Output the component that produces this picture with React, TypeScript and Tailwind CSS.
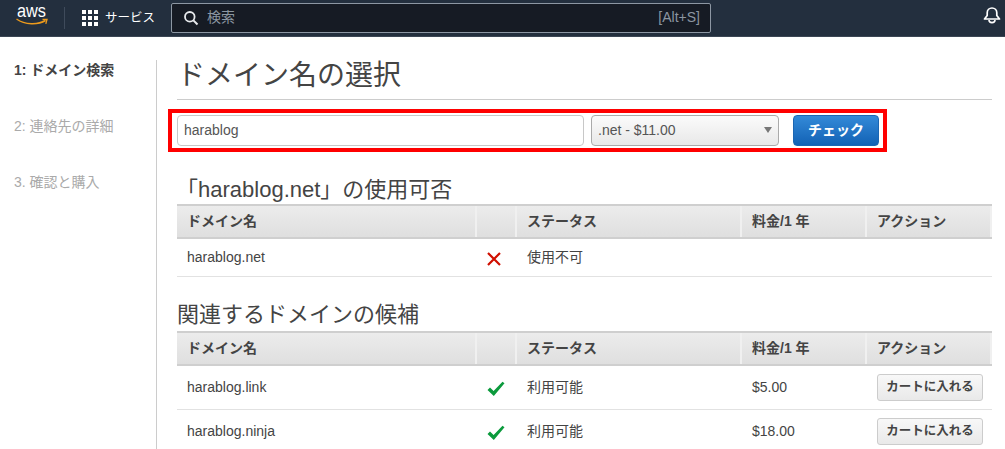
const FONT = "font-['Liberation_Sans','Noto_Sans_CJK_JP',sans-serif]";

function Cross() {
  return (
    <svg width="14" height="14" viewBox="0 0 14 14" className="block">
      <path d="M1 1 L13 13 M13 1 L1 13" stroke="#d00f00" strokeWidth="2.2" fill="none" />
    </svg>
  );
}

function Check() {
  return (
    <svg width="18" height="16" viewBox="0 0 18 16" className="block">
      <path d="M0.5 9 L3 6.6 L6.6 10 L15.5 0.8 L17.5 2.2 L6.8 15 Z" fill="#0b9a3c" />
    </svg>
  );
}

type Row = { name: string; ok: boolean; status: string; price?: string };

function DomainTable({ rows }: { rows: Row[] }) {
  const head = "flex items-center h-full text-[14px] font-bold text-[#444] pl-[10px] border-r-2 border-[#f0f0f0]";
  return (
    <div className="w-[815px]">
      <div className="flex h-[35px] border-t-2 border-b-2 border-[#cfcfcf] bg-gradient-to-b from-[#ececec] to-[#dfdfdf]">
        <div className={head + " w-[300px]"}>ドメイン名</div>
        <div className={head + " w-[40px]"} />
        <div className={head + " w-[225px]"}>ステータス</div>
        <div className={head + " w-[125px]"}>料金/1 年</div>
        <div className={head + " flex-1 border-r-0"}>アクション</div>
      </div>
      {rows.map((r) => (
        <div key={r.name} className={"flex items-center border-b border-[#e2e2e2] text-[14px] text-[#444] " + (r.price ? "h-[44px]" : "h-[38px]")}>
          <div className="w-[300px] pl-[10px] pb-[1px]">{r.name}</div>
          <div className="w-[40px] flex justify-start pl-[10px] pt-[2px]">{r.ok ? <Check /> : <Cross />}</div>
          <div className="w-[225px] pl-[10px] pb-[1px]">{r.status}</div>
          <div className="w-[125px] pl-[10px] pb-[1px]">{r.price}</div>
          <div className="flex-1 pl-[10px]">
            {r.price && (
              <button className="block w-[106px] h-[27px] rounded-[3px] border border-[#cccccc] bg-gradient-to-b from-[#f8f8f8] to-[#e9e9e9] text-[12.5px] font-bold text-[#444]">
                カートに入れる
              </button>
            )}
          </div>
        </div>
      ))}
    </div>
  );
}

export default function App() {
  return (
    <div className={FONT + " w-[1005px] h-[449px] overflow-hidden bg-white"}>
      <header className="h-[37px] bg-[#232f3e] flex items-center border-b border-[#3b4654]">
        <div className="w-[64px] pl-[16px] shrink-0">
          <svg width="32" height="36" viewBox="0 0 32 36" className="block">
            <text x="1" y="17" fontSize="18" textLength="29" lengthAdjust="spacingAndGlyphs" fill="#ffffff" fontFamily="'Liberation Sans',sans-serif">aws</text>
            <path d="M0.5 19 C9 25 22 25 29.5 20.5" stroke="#ec9a1c" strokeWidth="1.5" fill="none" />
            <path d="M26.5 19.5 L31 19.4 L29.8 23.8" stroke="#ec9a1c" strokeWidth="1.3" fill="none" />
          </svg>
        </div>
        <div className="w-px h-[22px] bg-[#3f4b5b]" />
        <div className="grid grid-cols-3 gap-[2px] ml-[17px] w-[16px] shrink-0">
          {Array.from({ length: 9 }, (_, i) => (
            <span key={i} className="w-[4px] h-[4px] bg-white block" />
          ))}
        </div>
        <span className="ml-[7px] text-[12.5px] text-white w-[50px] whitespace-nowrap">サービス</span>
        <div className="ml-[16px] w-[540px] h-[30px] mb-[1px] bg-[#161b24] border border-[#8d97a3] rounded-[2px] flex items-center">
          <svg width="16" height="16" viewBox="0 0 16 16" className="ml-[11px] block">
            <circle cx="6.8" cy="6.8" r="4.8" stroke="#e8eaed" strokeWidth="1.8" fill="none" />
            <path d="M10.4 10.4 L14.5 14.5" stroke="#e8eaed" strokeWidth="2" />
          </svg>
          <span className="ml-[8px] text-[14px] text-[#8b96a1]">検索</span>
          <span className="ml-auto mr-[10px] text-[14px] text-[#8b96a1]">[Alt+S]</span>
        </div>
        <svg width="18" height="18" viewBox="0 0 18 18" className="ml-[272px] mb-[6px] block">
          <path d="M1.5 13 L4.2 9.5 V6.8 C4.2 4 6.3 2 9 2 C11.7 2 13.8 4 13.8 6.8 V9.5 L16.5 13 Z" stroke="#ffffff" strokeWidth="1.7" fill="none" strokeLinejoin="round" />
          <path d="M6 14 C6 17.5 12 17.5 12 14" stroke="#ffffff" strokeWidth="1.6" fill="none" />
        </svg>
      </header>

      <div className="flex">
        <aside className="w-[157px] shrink-0 h-[389px] mt-[23px] border-r border-[#cccccc] pl-[14px] text-[14px] leading-[20px]">
          <div className="h-[56px] font-bold text-[#444]">1: ドメイン検索</div>
          <div className="h-[56px] text-[#aaaaaa]">2: 連絡先の詳細</div>
          <div className="text-[#aaaaaa]">3. 確認と購入</div>
        </aside>

        <main className="pl-[20px] flex-1">
          <h1 className="w-[815px] h-[63px] pt-[21px] border-b border-[#cccccc] text-[28px] leading-[36px] text-[#444] font-normal">
            ドメイン名の選択
          </h1>
          <div className="-ml-[9px] mt-[9px] w-[719px] h-[43px] border-[4px] border-[#ff0000] flex items-center pl-[5px]">
            <div className="w-[407px] h-[31px] border border-[#c8c8c8] rounded-[4px] bg-white flex items-center pl-[6px] text-[14px] text-[#555]">
              harablog
            </div>
            <div className="ml-[7px] w-[188px] h-[31px] border border-[#aaaaaa] rounded-[4px] bg-gradient-to-b from-[#fbfbfb] to-[#e8e8e8] flex items-center pl-[6px] pr-[5px] text-[14px] text-[#555]">
              .net - $11.00
              <svg width="10" height="6" viewBox="0 0 10 6" className="ml-auto mb-[2px] block">
                <path d="M1 0 H9 L5 6 Z" fill="#777777" />
              </svg>
            </div>
            <button className="ml-[14px] w-[86px] h-[31px] rounded-[4px] border border-[#1b66b3] bg-gradient-to-b from-[#338ad8] to-[#1262b5] text-white text-[14px] font-bold">
              チェック
            </button>
          </div>

          <h2 className="mt-[23px] h-[29px] text-[22px] leading-[29px] text-[#444] font-normal -ml-[1px]">
            「harablog.net」の使用可否
          </h2>
          <DomainTable rows={[{ name: "harablog.net", ok: false, status: "使用不可" }]} />

          <h2 className="mt-[23px] h-[31px] text-[22px] leading-[29px] text-[#444] font-normal">
            関連するドメインの候補
          </h2>
          <DomainTable
            rows={[
              { name: "harablog.link", ok: true, status: "利用可能", price: "$5.00" },
              { name: "harablog.ninja", ok: true, status: "利用可能", price: "$18.00" },
            ]}
          />
        </main>
      </div>
    </div>
  );
}
